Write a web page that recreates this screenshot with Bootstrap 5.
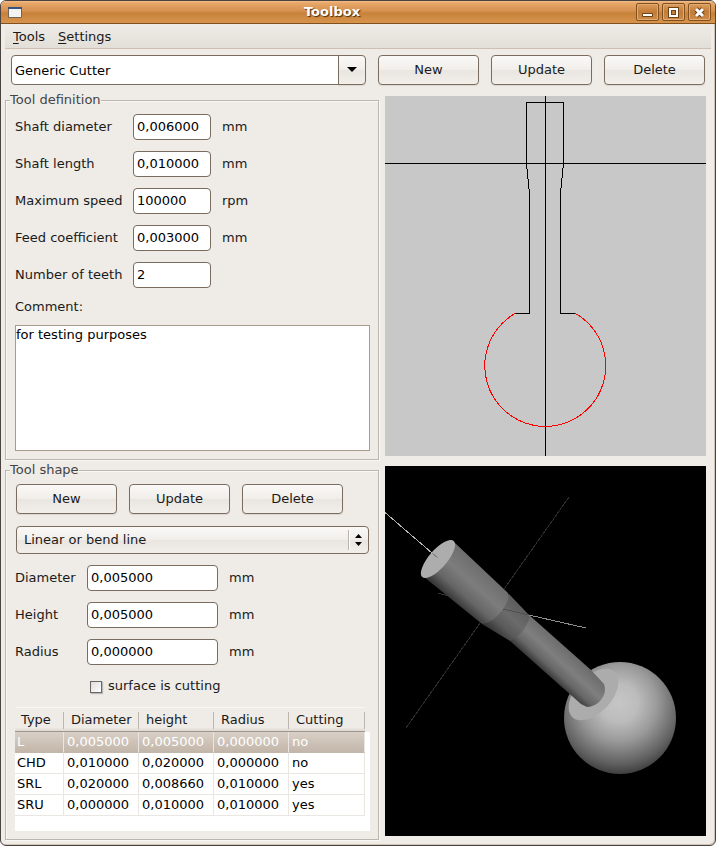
<!DOCTYPE html>
<html lang="en">
<head>
<meta charset="utf-8">
<meta name="viewport" content="width=device-width, initial-scale=1">
<title>Toolbox</title>
<link href="https://cdn.jsdelivr.net/npm/bootstrap@5.3.0/dist/css/bootstrap.min.css" rel="stylesheet">
<style>
:root { --line: #7a6d60; --face: #efebe6; }
body { font: 13px/18px "DejaVu Sans", sans-serif; color: #1a1a1a; background: #fff; }
.window { background: var(--face); border: 1px solid #4a4340; border-radius: 6px; box-shadow: inset -1px -1px 0 #d0c4b8; overflow: hidden; }
.titlebar { height: 23px; padding: 0 4px 0 7px; gap: 3px; border-bottom: 1px solid #80501f;
  background: linear-gradient(#f0bd8c 0, #e8a768 2px, #d59150 10px, #c7823a 12px, #d8944d 100%); }
.titlebar h1 { padding-left: 6px; font-size: 13px; line-height: 20px; color: #fff; text-shadow: 1px 1px 1px #4a2c0c; }
.winbtn { width: 23px; height: 18px; border: 1px solid #80501f; border-radius: 2px; background: linear-gradient(#dd9c5e, #c27c36 50%, #cf8b47); box-shadow: inset 0 0 0 1px #e3ab74; }
.menus { height: 25px; margin: 0 4px; padding-left: 4px; border-bottom: 1px solid #cdc0b2; background: linear-gradient(#efebe6, #e3ded8); }
.menus a { padding: 5px 4px 3px; margin-right: 5px; color: #1a1a1a; text-decoration: none; }
.menus u { text-underline-offset: 2px; }
.toolbar { padding: 6px 10px 0; }
.toolbar, .toolrow { gap: 12px; }
.toolrow, .kindrow { padding-left: 1px; }
.gbtn { width: 101px; height: 30px; padding: 0; font-size: 13px; line-height: 18px; color: #1a1a1a; border: 1px solid var(--line); border-radius: 4px;
  background: linear-gradient(#faf9f7, #f1eeea 49%, #e9e5e0 51%, #f2efeb); box-shadow: 0 1px 1px #dcd6cf; }
.form-control { font-size: 13px; line-height: 18px; height: 26px; padding: 0 3px 2px; color: #000; border: 1px solid var(--line); border-radius: 4px; }
.combo .form-control { height: 30px; padding-bottom: 0; }
.combo .gbtn { width: 28px; padding-bottom: 2px; }
.panes { padding: 6px 9px 4px 4px; gap: 6px; grid-template-columns: minmax(0, 374fr) minmax(0, 321fr); }
.group { border: 1px solid #bcb6ae; box-shadow: inset 1px 1px 0 #faf8f6, 1px 1px 0 #faf8f6; padding: 5px 8px 8px 9px; margin-bottom: 1px; }
.group legend { float: none; width: auto; margin: 0 0 0 -5px; font-size: 13px; line-height: 18px; color: #444; background: var(--face); }
.fields { row-gap: 11px; grid-template-columns: 118px 78px auto; }
.fields.shape { grid-template-columns: 72px 131px auto; margin: 11px 0 12px; }
.unit { margin-left: 11px; }
.note { margin: 10px 0 9px; }
textarea.form-control { height: 126px; padding: 0; border-color: #a89c90; border-radius: 0; resize: none; }
.kindrow { margin-top: 12px; padding-right: 1px; }
.kind { height: 28px; padding: 0 24px 0 7px; font-size: 13px; line-height: 18px; color: #1a1a1a; border: 1px solid var(--line); border-radius: 4px;
  background: url("data:image/svg+xml,%3Csvg xmlns='http://www.w3.org/2000/svg' width='20' height='20'%3E%3Cpath d='M.5 0v20' stroke='%23b9b2aa'/%3E%3Cpath d='M1.5 0v20' stroke='%23fff'/%3E%3Cpath d='M7 8l3.500-4L14 8zM7 12l3.500 4L14 12z'/%3E%3C/svg%3E") right center no-repeat, linear-gradient(#faf9f7, #f1eeea 49%, #e9e5e0 51%, #f2efeb); }
.tick { appearance: none; width: 12px; height: 12px; margin: 2px 0 0; border: 1px solid #6b665f; background: linear-gradient(135deg, #ddd, #fff); box-shadow: 1px 1px 1px #bbb; }
.cutting { margin: 0 0 12px 75px; gap: 6px; }
.shapes { background: linear-gradient(var(--face) 25px, #fff 25px); height: 124px; }
.shapes table { width: 350px; table-layout: fixed; border-collapse: separate; border-spacing: 0; }
.shapes th { height: 25px; padding: 0 0 0 6px; font-weight: 400; background: linear-gradient(#bdb6ae, #bdb6ae) right 0 top 4px / 1px 17px no-repeat, linear-gradient(var(--face) 85%, #ddd7d0); border-bottom: 1px solid #a0968f; border-top: 1px solid #f8f6f4; }
.shapes th + th { padding-left: 7px; }
.shapes td { height: 21px; padding: 0 0 0 3px; line-height: 18px; color: #000; border-right: 1px solid #eae6e1; border-bottom: 1px solid #eae6e1; }
.shapes td:first-child { padding-left: 2px; }
.shapes .picked td { color: #fff; background: linear-gradient(#d9d0c7, #c3b6aa); border-bottom-color: #c3b6aa; }
.c-type { width: 49px; }
.c-num { width: 75px; }
.views { padding-top: 5px; gap: 10px; }
</style>
<script src="https://cdn.jsdelivr.net/npm/bootstrap@5.3.0/dist/js/bootstrap.bundle.min.js"></script>
</head>
<body>
<div class="window">
  <header class="titlebar d-flex align-items-center">
    <svg width="14" height="11" viewBox="0 0 14 11" aria-hidden="true"><path fill="#f3f3f3" stroke="#6f6558" d="M.5.5h13v10H.5z"/><path fill="#34557f" d="M0 0h14v2H0z"/></svg>
    <h1 class="fw-bold text-center flex-grow-1 m-0">Toolbox</h1>
    <button class="winbtn p-0 d-flex align-items-center justify-content-center" type="button" aria-label="Minimize"><svg width="11" height="11"><path fill="#fff" stroke="#6d4319" d="M.5 6.500h10v3H.5z"/></svg></button>
    <button class="winbtn p-0 d-flex align-items-center justify-content-center" type="button" aria-label="Maximize"><svg width="11" height="11"><path fill="none" stroke="#6d4319" stroke-width="4" d="M2 2h7v7H2z"/><path fill="none" stroke="#fff" stroke-width="2" d="M2 2h7v7H2z"/></svg></button>
    <button class="winbtn p-0 d-flex align-items-center justify-content-center" type="button" aria-label="Close"><svg width="11" height="11"><path stroke="#6d4319" stroke-width="5" d="M2 2l7 7M9 2L2 9"/><path stroke="#fff" stroke-width="3" d="M2 2l7 7M9 2L2 9"/></svg></button>
  </header>
  <nav class="menus d-flex align-items-center"><a href="#"><u>T</u>ools</a><a href="#"><u>S</u>ettings</a></nav>

  <div class="toolbar d-flex">
    <div class="combo input-group flex-nowrap w-auto flex-grow-1">
      <input class="form-control" type="text" value="Generic Cutter" aria-label="Tool">
      <button class="gbtn" type="button" aria-label="Choose tool"><svg width="10" height="5" class="d-block mx-auto"><path d="M0 0h10L5 5z"/></svg></button>
    </div>
    <button class="gbtn" type="button">New</button>
    <button class="gbtn" type="button">Update</button>
    <button class="gbtn" type="button">Delete</button>
  </div>

  <main class="panes d-grid">
    <div>
      <fieldset class="group">
        <legend>Tool definition</legend>
        <div class="fields d-grid align-items-center">
          <label for="sd">Shaft diameter</label><input id="sd" class="form-control" value="0,006000"><span class="unit">mm</span>
          <label for="sl">Shaft length</label><input id="sl" class="form-control" value="0,010000"><span class="unit">mm</span>
          <label for="ms">Maximum speed</label><input id="ms" class="form-control" value="100000"><span class="unit">rpm</span>
          <label for="fc">Feed coefficient</label><input id="fc" class="form-control" value="0,003000"><span class="unit">mm</span>
          <label for="nt">Number of teeth</label><input id="nt" class="form-control" value="2"><span></span>
        </div>
        <label for="comment" class="note d-block">Comment:</label>
        <textarea id="comment" class="form-control">for testing purposes</textarea>
      </fieldset>

      <fieldset class="group">
        <legend>Tool shape</legend>
        <div class="toolrow d-flex">
          <button class="gbtn" type="button">New</button>
          <button class="gbtn" type="button">Update</button>
          <button class="gbtn" type="button">Delete</button>
        </div>
        <div class="kindrow"><select class="form-select kind" aria-label="Shape type"><option>Linear or bend line</option></select></div>
        <div class="fields shape d-grid align-items-center">
          <label for="di">Diameter</label><input id="di" class="form-control" value="0,005000"><span class="unit">mm</span>
          <label for="he">Height</label><input id="he" class="form-control" value="0,005000"><span class="unit">mm</span>
          <label for="ra">Radius</label><input id="ra" class="form-control" value="0,000000"><span class="unit">mm</span>
        </div>
        <div class="cutting d-flex align-items-center"><input id="cut" class="tick" type="checkbox"><label for="cut">surface is cutting</label></div>
        <div class="shapes">
          <table>
            <colgroup><col class="c-type"><col class="c-num"><col class="c-num"><col class="c-num"><col></colgroup>
            <thead><tr><th>Type</th><th>Diameter</th><th>height</th><th>Radius</th><th>Cutting</th></tr></thead>
            <tbody>
              <tr class="picked"><td>L</td><td>0,005000</td><td>0,005000</td><td>0,000000</td><td>no</td></tr>
              <tr><td>CHD</td><td>0,010000</td><td>0,020000</td><td>0,000000</td><td>no</td></tr>
              <tr><td>SRL</td><td>0,020000</td><td>0,008660</td><td>0,010000</td><td>yes</td></tr>
              <tr><td>SRU</td><td>0,000000</td><td>0,010000</td><td>0,010000</td><td>yes</td></tr>
            </tbody>
          </table>
        </div>
      </fieldset>
    </div>

    <div class="views d-flex flex-column">
      <svg class="d-block w-100" viewBox="0 0 321 360" role="img" aria-label="Tool profile" shape-rendering="crispEdges" fill="none" stroke="#000">
        <path fill="#c8c8c8" stroke="none" d="M0 0h321v360H0z"/>
        <path d="M0 67.500h321M160.500 0v360"/>
        <path d="M130 217.500h14.500V97.500L141.500 67.500V6.500h37v61l-3 30v120H190"/>
        <path stroke="#f00" d="M130 217.500A60.500 60.500 0 1 0 190.500 217.500"/>
      </svg>
      <svg class="d-block w-100" viewBox="0 0 321 370" role="img" aria-label="Tool in three dimensions">
        <defs>
          <linearGradient id="g1" gradientUnits="userSpaceOnUse" x1="99" y1="102" x2="67" y2="138"><stop offset="0" stop-color="#6c6c6c"/><stop offset=".4" stop-color="#7d7d7d"/><stop offset=".7" stop-color="#666"/><stop offset="1" stop-color="#2c2c2c"/></linearGradient>
          <linearGradient id="g2" gradientUnits="userSpaceOnUse" x1="135" y1="138" x2="108" y2="168"><stop offset="0" stop-color="#5c5c5c"/><stop offset=".4" stop-color="#6b6b6b"/><stop offset=".7" stop-color="#5a5a5a"/><stop offset="1" stop-color="#303030"/></linearGradient>
          <linearGradient id="g3" gradientUnits="userSpaceOnUse" x1="174" y1="175" x2="150" y2="201"><stop offset="0" stop-color="#6c6c6c"/><stop offset=".4" stop-color="#7f7f7f"/><stop offset=".7" stop-color="#666"/><stop offset="1" stop-color="#2a2a2a"/></linearGradient>
          <radialGradient id="gs" gradientUnits="userSpaceOnUse" cx="234" cy="237" r="76"><stop offset="0" stop-color="#c6c6c6"/><stop offset=".25" stop-color="#bcbcbc"/><stop offset=".5" stop-color="#9a9a9a"/><stop offset=".8" stop-color="#606060"/><stop offset="1" stop-color="#2e2e2e"/></radialGradient>
        </defs>
        <path d="M0 0h321v370H0z"/>
        <g fill="none" shape-rendering="crispEdges"><path stroke="#2c2c2c" d="M184 31L21 262"/><path stroke="#333" d="M53 127l10 3"/></g>
        <circle cx="235" cy="252" r="56" fill="url(#gs)"/>
        <ellipse cx="208.500" cy="228.500" rx="31" ry="18" transform="rotate(-47 208.500 228.500)" fill="#acacac"/>
        <path fill="url(#g3)" d="M143 148L206 204L219 218Q222 226 216 234Q210 241 202 241L196 238L125 175z"/>
        <path fill="url(#g2)" d="M124 128L143 148Q146 151 142 158Q136 170 125 175L97 158z"/>
        <path fill="url(#g1)" d="M70 77L123 127Q125 131 121 138Q111 156 97 158L39 111z"/>
        <ellipse cx="53" cy="93" rx="24" ry="9" transform="rotate(-49 53 93)" fill="#adadad"/>
        <g fill="none" shape-rendering="crispEdges"><path stroke="#b4b4b4" d="M0 46.500L47 87"/><path stroke="#858585" d="M47 87l6 5"/><path stroke="#505050" d="M118 143L144 149"/><path stroke="#8c8c8c" d="M144 149L201 162"/></g>
      </svg>
    </div>
  </main>
</div>
</body>
</html>
